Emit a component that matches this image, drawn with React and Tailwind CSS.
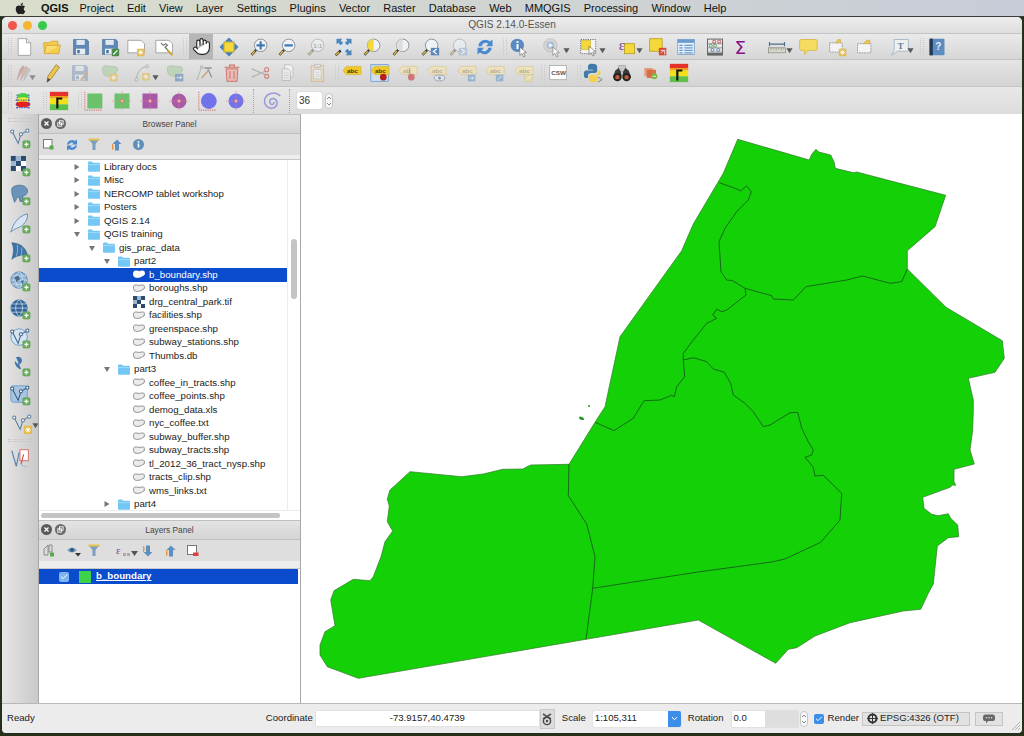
import { Hand, Check } from "lucide-react";
import { FaApple } from "react-icons/fa";

const MENU = [
  "Project", "Edit", "View", "Layer", "Settings", "Plugins", "Vector", "Raster",
  "Database", "Web", "MMQGIS", "Processing", "Window", "Help",
];

const TREE = [
  { level: 0, kind: "closed", label: "Library docs" },
  { level: 0, kind: "closed", label: "Misc" },
  { level: 0, kind: "closed", label: "NERCOMP tablet workshop" },
  { level: 0, kind: "closed", label: "Posters" },
  { level: 0, kind: "closed", label: "QGIS 2.14" },
  { level: 0, kind: "open", label: "QGIS training" },
  { level: 1, kind: "open", label: "gis_prac_data" },
  { level: 2, kind: "open", label: "part2" },
  { level: 3, kind: "file", label: "b_boundary.shp", selected: true },
  { level: 3, kind: "file", label: "boroughs.shp" },
  { level: 3, kind: "raster", label: "drg_central_park.tif" },
  { level: 3, kind: "file", label: "facilities.shp" },
  { level: 3, kind: "file", label: "greenspace.shp" },
  { level: 3, kind: "file", label: "subway_stations.shp" },
  { level: 3, kind: "file", label: "Thumbs.db" },
  { level: 2, kind: "open", label: "part3" },
  { level: 3, kind: "file", label: "coffee_in_tracts.shp" },
  { level: 3, kind: "file", label: "coffee_points.shp" },
  { level: 3, kind: "file", label: "demog_data.xls" },
  { level: 3, kind: "file", label: "nyc_coffee.txt" },
  { level: 3, kind: "file", label: "subway_buffer.shp" },
  { level: 3, kind: "file", label: "subway_tracts.shp" },
  { level: 3, kind: "file", label: "tl_2012_36_tract_nysp.shp" },
  { level: 3, kind: "file", label: "tracts_clip.shp" },
  { level: 3, kind: "file", label: "wms_links.txt" },
  { level: 2, kind: "closed", label: "part4" },
];

const LEVEL_PAD = ["pl-[34px]", "pl-[49px]", "pl-[64px]", "pl-[79px]"];

const OUTLINE =
  "M737.7 139.3 L809.3 160 L811.7 154.3 L816 149.3 L818.7 152 L830.7 155 L834 161.7 L835.3 168.3 L853.3 172.7 L856.7 172 L945.7 195.3 L935 226.7 L907.3 250.7 L907.3 269 L946 307.3 L1002.3 340.7 L1004.3 358.3 L995 372.3 L968.3 378.3 L973.3 400 L973.3 410 L972.7 430 L970 450 L974.3 464 L954 469.3 L954 481.7 L955.7 485.3 L952.7 485 L950 487.3 L922.7 497.3 L924 508.3 L931.7 514.3 L938.3 515.7 L948.3 513.7 L950.7 518.3 L957.7 525 L958.7 536.7 L948.3 537.7 L937.3 546 L933.3 584 L928.3 593.3 L920.7 609.3 L903.3 611 L850 622.7 L815 636 L796.7 647.7 L788.3 649.3 L775.7 663.3 L698.3 620 L586 639.3 L358.3 678.3 L327.3 666.7 L320 655 L320 645 L325 631.7 L335 625.7 L330.7 600 L334 590.7 L353.3 579.3 L370 580.7 L373.3 576.7 L381 556.7 L385 541.7 L392.7 531 L387.3 521.7 L389.3 506 L387.3 499 L390 490 L410 471.7 L461.7 476.7 L483.3 474 L502.7 469.3 L522.7 469 L530.7 465 L569 464.3 L595 422.3 L605 406.7 L620 336.7 L681.7 250.7 L693.3 224 L723.3 173.3 Z";

const BOUNDARIES = [
  "M719.3 182.7 L733.3 187.7 L740.7 190.7 L746.7 186 L751.3 191.7 L748.3 200 L736.7 211.7 L725 228.3 L719 241.7 L721 271.7 L726.7 280 L732.7 280.7 L745 288.3 L771.7 295.7 L773.3 299 L793.3 300 L806 286.7 L846.7 280 L862.7 276 L890 283.3 L901.7 281.7 L907.3 269",
  "M745 288.3 L746 295 L726.7 310 L721.7 311.7 L716.7 309.3 L712.7 315 L716.7 318.3 L706.7 323.3 L693.3 340 L683.3 353.3 L683.3 360 L684.7 376.7 L676.7 386.7 L674.3 396.7 L671.7 395.3 L660 400 L644 400.7 L633.3 418.3 L614 430.7 L595 422.3",
  "M683.3 360 L693.3 357.7 L706.7 361.7 L713.3 369 L724.3 372.3 L730.7 383.3 L733.3 395 L745 403.3 L753.3 411.7 L763.3 426.7 L770 425 L790 412.7 L797.7 412.3 L801.7 428.3 L808.3 441.7 L813.3 450 L811.7 455 L805 457.3 L813.3 467.3 L815 476 L823.3 475.3 L841.7 493.3 L840 520 L820.7 542.3 L785 559 L771.7 562 L700 571.7 L592.7 588.3",
  "M569 464.3 L568.3 495.7 L586.7 524 L595 556.7 L592.7 588.3 L586 639.3",
];

function Svg({ children, size = 20 }) {
  return (
    <svg width={size} height={size} viewBox="0 0 24 24" className="block overflow-visible">
      {children}
    </svg>
  );
}

function Tool({ children, className = "" }) {
  return (
    <div className={`w-[24px] h-[24px] shrink-0 flex items-center justify-center ${className}`}>{children}</div>
  );
}

function DropArrow({ className = "" }) {
  return (
    <svg width="7" height="7" viewBox="0 0 8 8" className={`shrink-0 mt-[8px] ${className}`}>
      <path d="M0.5 1.5 H7.5 L4 7 Z" fill="#5a5a5a" />
    </svg>
  );
}

function Handle({ className = "" }) {
  return (
    <div
      className={`w-[4px] h-[17px] shrink-0 border-x border-dotted border-[#c8c8c8] ${className}`}
    />
  );
}

function Separator({ className = "" }) {
  return <div className={`w-[2px] h-[24px] shrink-0 border-l border-dotted border-[#a4a4a4] ${className}`} />;
}

const PlusBadge = () => (
  <g>
    <rect x="15" y="15" width="8" height="8" rx="1.5" fill="#6ab05c" stroke="#4e9444" strokeWidth="0.5" />
    <path d="M19 16.8 V21.2 M16.8 19 H21.2" stroke="#fff" strokeWidth="1.4" />
  </g>
);

const StarBadge = ({ x = 14, y = 14 }) => (
  <g>
    <rect x={x} y={y} width="9" height="9" rx="1" fill="#e5bb4a" />
    <path
      d={`M${x + 4.5} ${y + 1.5} V${y + 7.5} M${x + 1.5} ${y + 4.5} H${x + 7.5} M${x + 2.4} ${y + 2.4} L${x + 6.6} ${y + 6.6} M${x + 6.6} ${y + 2.4} L${x + 2.4} ${y + 6.6}`}
      stroke="#fff"
      strokeWidth="1"
    />
  </g>
);

const Cursor = ({ x = 12, y = 11 }) => (
  <path
    d={`M${x} ${y} l0 10 l2.6 -2.2 l2 4 l1.8 -0.9 l-2 -3.8 l3.4 -0.4 Z`}
    fill="#fff"
    stroke="#555"
    strokeWidth="0.7"
  />
);

const Mag = ({ children, fill = "#eef3f8" }) => (
  <g>
    <path d="M3 21.5 L9 15" stroke="#444" strokeWidth="3" />
    <path d="M3.4 21 L7 17" stroke="#e6b93a" strokeWidth="1.6" />
    <circle cx="14" cy="10" r="7.5" fill={fill} stroke="#8a8a8a" strokeWidth="1.1" />
    {children}
  </g>
);

const Floppy = () => (
  <g>
    <path d="M3 3 H19 L21 5 V21 H3 Z" fill="#5f88b4" stroke="#4d7096" strokeWidth="0.8" />
    <rect x="6.5" y="3.5" width="10" height="6" fill="#dfe7ef" />
    <rect x="6" y="14" width="11" height="7" fill="#e9eef3" />
    <rect x="7.5" y="15.5" width="3" height="4" fill="#4d7096" />
  </g>
);

const PolyBlob = ({ fill = "#a9cfa0" }) => (
  <path d="M3 6 C3 3 8 3 12 4 C17 5 21 3 21 8 C21 12 17 12 15 15 C12 17 6 16 4 13 C3 11 3 9 3 6 Z" fill={fill} stroke="#8aa88a" strokeWidth="0.8" />
);

const AbcTag = ({ bg = "#ecd98c", color = "#7d6b2c", children, text = "abc" }) => (
  <g>
    <path d="M1 9 L5 4 H23 V14 H5 Z" fill={bg} stroke="#c9b160" strokeWidth="0.6" />
    <text x="6" y="12" fontSize="7.5" fontWeight="700" fontFamily="Liberation Sans, sans-serif" fill={color}>{text}</text>
    {children}
  </g>
);

const DashedBox = ({ x = 2, y = 6, w = 16, h = 12 }) => (
  <rect x={x} y={y} width={w} height={h} fill="#f4f4f4" stroke="#777" strokeWidth="0.8" strokeDasharray="2 1" />
);

const Globe = ({ fill = "#6d9cc8", children }) => (
  <g>
    <circle cx="11" cy="11" r="9" fill={fill} stroke="#4d7aa6" strokeWidth="0.8" />
    <path d="M2 11 H20 M11 2 C6 6 6 16 11 20 M11 2 C16 6 16 16 11 20 M3.5 6.5 H18.5 M3.5 15.5 H18.5" stroke="#d8e6f2" strokeWidth="0.8" fill="none" />
    {children}
  </g>
);

const VNodes = ({ color = "#587a9c" }) => (
  <g fill="none" stroke={color} strokeWidth="1.1">
    <path d="M3.5 5 L10 18 L13 8 L20 4" />
    <circle cx="3.5" cy="5" r="1.7" fill="#fff" />
    <circle cx="13" cy="8" r="1.7" fill="#fff" />
    <circle cx="20" cy="4" r="1.7" fill="#fff" />
  </g>
);

const Checker = ({ x = 2, y = 2, c = 5.5 }) => (
  <g>
    <rect x={x} y={y} width={c * 3} height={c * 3} fill="#fff" />
    {[[0, 0], [2, 0], [1, 1], [0, 2], [2, 2]].map(([a, b]) => (
      <rect key={`${a}-${b}`} x={x + a * c} y={y + b * c} width={c} height={c} fill="#2b4a6e" />
    ))}
    <rect x={x + c} y={y} width={c} height={c} fill="#9db6cf" />
    <rect x={x} y={y + c} width={c} height={c} fill="#9db6cf" />
  </g>
);

const Crosshair = ({ fill, circle }) => (
  <g>
    {circle ? <circle cx="12" cy="12" r="9" fill={fill} /> : <rect x="3" y="3" width="18" height="18" fill={fill} />}
    <path d="M0 12 H24 M12 0 V24" stroke="#e88080" strokeWidth="0.7" strokeDasharray="2 1" />
    <circle cx="12" cy="12" r="2" fill="#eeb0b0" stroke="#d86060" strokeWidth="0.5" />
  </g>
);

const Corner = ({ fill, circle }) => (
  <g>
    {circle ? <circle cx="13" cy="12" r="9.5" fill={fill} /> : <rect x="4" y="3" width="18" height="18" fill={fill} />}
    <path d="M1 1 V23 H22" fill="none" stroke="#d85050" strokeWidth="1" strokeDasharray="1.5 1.2" />
  </g>
);

const Ramp = () => (
  <g>
    <rect x="1" y="1" width="22" height="5" fill="#e5322a" />
    <rect x="1" y="6" width="22" height="3" fill="#f2a218" />
    <rect x="1" y="9" width="22" height="7" fill="#f4e018" />
    <rect x="1" y="16" width="22" height="7" fill="#5fc04a" />
    <path d="M10 21 V9 H16" fill="none" stroke="#111" strokeWidth="2.6" />
  </g>
);

function TopToolbar() {
  return (
    <div className="h-[26px] flex items-center bg-gradient-to-b from-[#eaeaea] to-[#d6d6d6] border-b border-[#c4c4c4]">
      <Handle className="ml-[6px]" />
      <Tool>
        <Svg><path d="M5 2 H15 L20 7 V22 H5 Z" fill="#fff" stroke="#9a9a9a" /><path d="M15 2 V7 H20" fill="#eee" stroke="#9a9a9a" /></Svg>
      </Tool>
      <Tool className="ml-[4px]">
        <Svg><path d="M2 7 H9 L11 5 H19 V10 H22 L20 20 H3 Z" fill="#f4cd4a" stroke="#cfa63a" /><path d="M3 20 L5 10 H22" fill="#f8dc70" stroke="#cfa63a" /></Svg>
      </Tool>
      <Tool className="ml-[5px]"><Svg><Floppy /></Svg></Tool>
      <Tool className="ml-[5px]">
        <Svg><Floppy /><rect x="14" y="14" width="9" height="9" rx="1" fill="#4a8a4a" /><path d="M16 21 L21 16" stroke="#fff" strokeWidth="1.4" /></Svg>
      </Tool>
      <Tool className="ml-[3px]">
        <Svg><path d="M1 4 H17 L21 8 V19 H1 Z" fill="#fff" stroke="#999" /><StarBadge x={12} y={14} /></Svg>
      </Tool>
      <Tool className="ml-[4px]">
        <Svg><path d="M1 4 H17 L21 8 V19 H1 Z" fill="#fff" stroke="#999" /><path d="M7 7 L10 10 L13 8 L15 10 L12 12 L20 21" fill="none" stroke="#777" strokeWidth="1.4" /><path d="M15 16 L21 22" stroke="#d5a62a" strokeWidth="2.2" /></Svg>
      </Tool>
      <Handle className="ml-[6px]" />
      <div className="w-[24px] h-[25px] ml-[2px] shrink-0 bg-[#b6b6b6] flex items-center justify-center">
        <Hand size={19} fill="#fff" stroke="#222" strokeWidth={1.4} />
      </div>
      <Tool className="ml-[4px]">
        <Svg>
          <rect x="6" y="6" width="12" height="12" fill="#f5d93a" stroke="#b89d20" />
          <path d="M12 1 L16 5 H8 Z M12 23 L8 19 H16 Z M1 12 L5 8 V16 Z M23 12 L19 16 V8 Z" fill="#4a86c0" stroke="#33618f" strokeWidth="0.6" />
        </Svg>
      </Tool>
      <Tool className="ml-[6px]"><Svg><Mag><path d="M14 5 V15 M9 10 H19" stroke="#3f78b5" strokeWidth="2.6" /></Mag></Svg></Tool>
      <Tool className="ml-[4px]"><Svg><Mag><path d="M9 10 H19" stroke="#3f78b5" strokeWidth="2.6" /></Mag></Svg></Tool>
      <Tool className="ml-[5px] opacity-50">
        <Svg><Mag><text x="8.6" y="12.8" fontSize="7.5" fontWeight="700" fontFamily="Liberation Sans, sans-serif" fill="#777">1:1</text></Mag></Svg>
      </Tool>
      <Tool className="ml-[4px]">
        <Svg>
          <rect x="6" y="5" width="12" height="13" fill="#d9e4ee" />
          <path d="M3 2 H10 L8 4.5 L11 7 L8 10 L5 7 L3 9 Z M21 2 V9 L19 7 L16 10 L13 7 L16 4.5 L14 2 Z M21 22 H14 L16 19.5 L13 17 L16 14 L19 17 L21 15 Z" fill="#4f86bb" />
          <path d="M2 22 L8 16" stroke="#333" strokeWidth="3" /><path d="M2.4 21.6 L6 18" stroke="#e6b93a" strokeWidth="1.6" />
        </Svg>
      </Tool>
      <Tool className="ml-[4px]">
        <Svg><Mag><path d="M14 2.5 A7.5 7.5 0 0 0 14 17.5 Z" fill="#f5d93a" /></Mag></Svg>
      </Tool>
      <Tool className="ml-[5px]">
        <Svg><Mag><path d="M14 2.5 A7.5 7.5 0 0 0 14 17.5 Z" fill="#dedede" /></Mag></Svg>
      </Tool>
      <Tool className="ml-[5px]">
        <Svg><Mag /><rect x="13" y="13" width="10" height="9" fill="#5a88b8" /><path d="M20 14.5 L16 17.5 L20 20.5" fill="none" stroke="#fff" strokeWidth="1.5" /></Svg>
      </Tool>
      <Tool className="ml-[4px] opacity-50">
        <Svg><Mag /><rect x="13" y="13" width="10" height="9" fill="#8eb0d0" /><path d="M16 14.5 L20 17.5 L16 20.5" fill="none" stroke="#fff" strokeWidth="1.5" /></Svg>
      </Tool>
      <Tool className="ml-[3px]">
        <Svg>
          <path d="M4 11 A8.5 8.5 0 0 1 18 5.5 L21 3 V11 H13 L16 8 A5 5 0 0 0 8 11 Z" fill="#4a8ad0" />
          <path d="M20 13 A8.5 8.5 0 0 1 6 18.5 L3 21 V13 H11 L8 16 A5 5 0 0 0 16 13 Z" fill="#4a8ad0" />
        </Svg>
      </Tool>
      <Handle className="ml-[6px]" />
      <Tool>
        <Svg><circle cx="10" cy="10" r="8" fill="#5a8abf" /><rect x="9" y="8.5" width="2.4" height="6" fill="#fff" /><rect x="9" y="5" width="2.4" height="2.2" fill="#fff" /><Cursor x={13} y={12} /></Svg>
      </Tool>
      <Tool className="ml-[9px] opacity-80">
        <Svg><circle cx="10" cy="10" r="8" fill="#d0d0d0" stroke="#aaa" strokeDasharray="2.5 1" /><circle cx="10" cy="10" r="4.5" fill="#9bb8d6" /><path d="M8.5 7.5 L13 10 L8.5 12.5 Z" fill="#fff" /><Cursor x={13} y={12} /></Svg>
      </Tool>
      <DropArrow className="-ml-[1px]" />
      <Tool className="ml-[7px]">
        <Svg><rect x="2" y="3" width="18" height="17" fill="#f4f4f4" stroke="#555" strokeWidth="0.9" strokeDasharray="1.6 1.2" /><rect x="3" y="4" width="11" height="11" fill="#f5d93a" stroke="#b89d20" strokeWidth="0.5" /><Cursor x={12} y={11} /></Svg>
      </Tool>
      <DropArrow className="-ml-[2px]" />
      <Tool className="ml-[9px]">
        <Svg><rect x="9" y="8" width="12" height="12" fill="#f5d93a" stroke="#b89d20" /><text x="2" y="16" fontSize="18" fontFamily="Liberation Serif, serif" fill="#7b3f98">ε</text></Svg>
      </Tool>
      <DropArrow className="-ml-[3px]" />
      <Tool className="ml-[3px]">
        <Svg><rect x="2" y="2" width="15" height="15" fill="#f5d93a" stroke="#b89d20" /><rect x="13" y="13" width="9" height="9" fill="#d8483a" /><path d="M15.5 19.5 L19.5 15.5 M15 16 H20 V21" stroke="#fff" strokeWidth="0.9" fill="none" /></Svg>
      </Tool>
      <Tool className="ml-[4px]">
        <Svg><rect x="2" y="3" width="20" height="18" fill="#e5eef7" stroke="#7aa2c8" /><rect x="2" y="3" width="20" height="4" fill="#6a9cd0" /><path d="M4 10 H8 M10 10 H20 M4 13 H8 M10 13 H20 M4 16 H8 M10 16 H20 M4 19 H8 M10 19 H20" stroke="#6a9cd0" strokeWidth="1.4" /></Svg>
      </Tool>
      <Tool className="ml-[5px]">
        <Svg>
          <rect x="3" y="2.5" width="18" height="19" fill="#e9e9e9" stroke="#666" strokeWidth="1.2" />
          <path d="M3 8 H21 M3 13 H21 M3 18 H21" stroke="#777" strokeWidth="0.8" />
          <circle cx="11" cy="5.5" r="1.8" fill="none" stroke="#c23a3a" /><circle cx="17" cy="5.5" r="1.8" fill="none" stroke="#c23a3a" />
          <circle cx="7" cy="10.5" r="1.8" fill="none" stroke="#4a9a5a" /><circle cx="12" cy="10.5" r="1.8" fill="none" stroke="#4a9a5a" />
          <circle cx="9" cy="15.5" r="1.8" fill="none" stroke="#4a7ac0" /><circle cx="16" cy="15.5" r="1.8" fill="none" stroke="#4a7ac0" />
          <rect x="3" y="19" width="18" height="3" fill="#666" />
        </Svg>
      </Tool>
      <Tool className="ml-[3px]">
        <Svg><text x="3" y="20" fontSize="22" fontFamily="DejaVu Sans, sans-serif" fill="#84108a">Σ</text></Svg>
      </Tool>
      <Tool className="ml-[11px]">
        <Svg><path d="M3 6 V11 M21 6 V11 M3 8.5 H21" stroke="#4a6d8c" strokeWidth="1.4" /><rect x="2" y="13" width="20" height="6" fill="#d8d8c8" stroke="#777" strokeWidth="0.7" /><path d="M5 13 V16 M8 13 V15 M11 13 V16 M14 13 V15 M17 13 V16 M20 13 V15" stroke="#777" strokeWidth="0.6" /></Svg>
      </Tool>
      <DropArrow className="-ml-[3px]" />
      <Tool className="ml-[3px]">
        <Svg><path d="M4 3 H21 Q23 3 23 5 V14 Q23 16 21 16 H12 L8 21 V16 H4 Q2 16 2 14 V5 Q2 3 4 3 Z" fill="#f6dd62" stroke="#d3b53c" /></Svg>
      </Tool>
      <Tool className="ml-[6px]">
        <Svg><DashedBox x={2} y={7} w={15} h={11} /><path d="M9 7 L12 3 L15 3 V7 Z" fill="#ecc648" stroke="#c69c2a" strokeWidth="0.5" /><StarBadge x={13} y={14} /></Svg>
      </Tool>
      <Tool className="ml-[3px]">
        <Svg><DashedBox x={3} y={8} w={16} h={11} /><path d="M10 8 L14 4 L18 4 V8 Z" fill="#ecc648" stroke="#c69c2a" strokeWidth="0.5" /></Svg>
      </Tool>
      <Tool className="ml-[11px]">
        <Svg><path d="M5 3 H22 V17 H9 L2 22 L5 16 Z" fill="#f0f0f0" stroke="#a3b6c6" strokeWidth="1.1" /><text x="9" y="14" fontSize="11" fontWeight="700" fontFamily="Liberation Serif, serif" fill="#5d7f9e">T</text></Svg>
      </Tool>
      <DropArrow className="-ml-[5px]" />
      <Handle className="ml-[6px]" />
      <Tool className="ml-[1px]">
        <Svg><rect x="3" y="2" width="18" height="20" rx="1" fill="#5c8cc0" /><rect x="3" y="2" width="4" height="20" fill="#233a54" /><text x="10" y="16" fontSize="12" fontWeight="700" fontFamily="Liberation Sans, sans-serif" fill="#e5eef7">?</text></Svg>
      </Tool>
    </div>
  );
}

function EditToolbar() {
  return (
    <div className="h-[27px] flex items-center bg-gradient-to-b from-[#e4e4e4] to-[#d4d4d4] border-b border-[#c4c4c4]">
      <Handle className="ml-[6px]" />
      <Tool className="-ml-[1px] opacity-50">
        <Svg><path d="M5 20 L8 8 L12 3 L14 5 L11 10 Z" fill="#c87070" stroke="#966" strokeWidth="0.6" /><path d="M9 21 L12 9 L16 4 L18 6 L15 11 Z" fill="#c8a070" stroke="#966" strokeWidth="0.6" /><path d="M13 21 L15 11 L19 6 L21 8 L18 13 Z" fill="#b0b0b0" stroke="#888" strokeWidth="0.6" /></Svg>
      </Tool>
      <DropArrow className="-ml-[6px] opacity-60" />
      <Tool className="ml-[4px]">
        <Svg><path d="M6 23 L7 16 L17 2 L21 5 L11 19 Z" fill="#eac548" stroke="#8a7028" strokeWidth="0.8" /><path d="M6 23 L7 18 L10 20 Z" fill="#444" /></Svg>
      </Tool>
      <Tool className="ml-[4px] opacity-40"><Svg><Floppy /><path d="M13 21 L21 11" stroke="#c06a3a" strokeWidth="2.4" /></Svg></Tool>
      <Tool className="ml-[6px] opacity-60"><Svg><PolyBlob /><StarBadge x={12} y={13} /></Svg></Tool>
      <Tool className="ml-[9px] opacity-60">
        <Svg><path d="M4 20 C5 10 10 5 17 4" fill="none" stroke="#7aa07a" strokeWidth="1.2" /><circle cx="4" cy="20" r="1.7" fill="#fff" stroke="#777" /><circle cx="17" cy="4" r="1.7" fill="#fff" stroke="#777" /><StarBadge x={11} y={12} /></Svg>
      </Tool>
      <DropArrow className="-ml-[3px]" />
      <Tool className="ml-[4px] opacity-60"><Svg><PolyBlob /><rect x="12" y="13" width="10" height="9" fill="#5a88b8" /><path d="M14 17.5 H20 M18 15.5 L20 17.5 L18 19.5" fill="none" stroke="#fff" /></Svg></Tool>
      <Tool className="ml-[6px] opacity-60">
        <Svg><path d="M2 21 L8 5" stroke="#7a9a7a" strokeWidth="1" /><circle cx="8" cy="5" r="1.4" fill="#fff" stroke="#666" /><path d="M11 6 H20 M15 6 L20 17" stroke="#666" strokeWidth="1.6" /><path d="M8 18 L16 9" stroke="#b88a3a" strokeWidth="2" /></Svg>
      </Tool>
      <Tool className="ml-[3px] opacity-70">
        <Svg><path d="M5 7 H19 L18 22 H6 Z" fill="#f0b0a8" stroke="#c84a3a" strokeWidth="1.2" /><path d="M3 5 H21 M9 5 V2.5 H15 V5 M9.5 10 V19 M14.5 10 V19" stroke="#c84a3a" strokeWidth="1.3" fill="none" /></Svg>
      </Tool>
      <Tool className="ml-[4px] opacity-60">
        <Svg><path d="M2 7 L18 14 M2 17 L18 10" stroke="#999" strokeWidth="1.5" /><circle cx="20" cy="8" r="2.4" fill="none" stroke="#c84a3a" strokeWidth="1.3" /><circle cx="20" cy="16" r="2.4" fill="none" stroke="#c84a3a" strokeWidth="1.3" /></Svg>
      </Tool>
      <Tool className="ml-[4px] opacity-50">
        <Svg><path d="M8 2 H15 L18 5 V17 H8 Z" fill="#fff" stroke="#999" /><path d="M5 7 H12 L15 10 V21 H5 Z" fill="#f6f6f6" stroke="#999" /><path d="M7 12 H13 M7 15 H13 M7 18 H13" stroke="#bbb" /></Svg>
      </Tool>
      <Tool className="ml-[5px] opacity-50">
        <Svg><rect x="5" y="3" width="15" height="19" fill="#f3d6a4" stroke="#c49a5a" /><rect x="9" y="1.5" width="7" height="4" fill="#ddd" stroke="#999" /><rect x="8" y="8" width="9" height="11" fill="#fff" stroke="#aaa" /><path d="M10 11 H15 M10 13.5 H15 M10 16 H15" stroke="#bbb" /></Svg>
      </Tool>
      <Handle className="ml-[6px]" />
      <Tool className="ml-[1px]">
        <Svg><AbcTag bg="#f0c828" color="#443810" /></Svg>
      </Tool>
      <Tool className="ml-[4px]">
        <Svg><rect x="1" y="2" width="21" height="20" fill="#cfe0f0" stroke="#6a9cd0" /><AbcTag bg="#f0c828" color="#443810" /><circle cx="16" cy="17" r="4" fill="#b81f1f" /></Svg>
      </Tool>
      <Tool className="ml-[4px] opacity-70"><Svg><AbcTag bg="#f2e2b0" color="#a89870" text="ab" /><circle cx="16" cy="17" r="4" fill="#c85050" /><path d="M14 6 V14" stroke="#c85050" /></Svg></Tool>
      <Tool className="ml-[5px] opacity-70"><Svg><AbcTag bg="#f2e2b0" color="#a89870" /><ellipse cx="15" cy="18" rx="6.5" ry="3.5" fill="#e8eef2" stroke="#6f8296" /><circle cx="15" cy="18" r="1.8" fill="#5a7a96" /></Svg></Tool>
      <Tool className="ml-[6px] opacity-70"><Svg><AbcTag bg="#f2e2b0" color="#a89870" /><rect x="13" y="14" width="9" height="8" fill="#7aa4cc" /><path d="M15 18 H20 M18 16 L20 18 L18 20" fill="none" stroke="#fff" /></Svg></Tool>
      <Tool className="ml-[4px] opacity-70"><Svg><AbcTag bg="#f2e2b0" color="#a89870" /><rect x="13" y="14" width="9" height="8" fill="#7aa4cc" /><path d="M15 20 L20 16" stroke="#fff" /></Svg></Tool>
      <Tool className="ml-[5px] opacity-70"><Svg><AbcTag bg="#f2e2b0" color="#a89870" /><rect x="13" y="14" width="9" height="8" fill="#e9dc9c" stroke="#c9b160" strokeWidth="0.5" /><path d="M15 20 L20 16" stroke="#fff" /></Svg></Tool>
      <Handle className="ml-[5px]" />
      <Tool className="ml-[1px]">
        <Svg><rect x="2" y="3" width="20" height="17" fill="#fff" stroke="#aaa" /><text x="4" y="14.5" fontSize="7.5" fontWeight="700" fontFamily="Liberation Sans, sans-serif" fill="#555">CSW</text></Svg>
      </Tool>
      <Handle className="ml-[7px]" />
      <Tool>
        <Svg>
          <path d="M11 1 C6 1 6 3 6 6 V8 H12 V9 H4 C1 9 1 12 1 14 C1 17 2 18 4 18 H6 V15 C6 13 8 12 10 12 H14 C16 12 17 11 17 9 V5 C17 2 15 1 11 1 Z" fill="#4179a8" />
          <path d="M12 23 C17 23 18 21 18 18 V16 H12 V15 H20 L21 12 C21 9 20 9 18 9 V11 C18 13 16 14 14 14 H10 C8 14 7 15 7 17 V19 C7 22 9 23 12 23 Z" fill="#f4d04c" />
          <path d="M18 17 L23 20 L18 23" fill="none" stroke="#777" strokeWidth="1" />
        </Svg>
      </Tool>
      <Tool className="ml-[5px]">
        <Svg>
          <path d="M8 3 H16 L17 10 H7 Z" fill="#c8c8c8" stroke="#888" strokeWidth="0.6" />
          <path d="M4 9 L8 6 L11 11 V14 H13 V11 L16 6 L20 9 L23 17 H13 V15 H11 V17 H1 Z" fill="#3a3a3a" />
          <circle cx="6.5" cy="17" r="5" fill="#222" /><circle cx="17.5" cy="17" r="5" fill="#222" />
          <circle cx="6.5" cy="17" r="2.6" fill="#c05a3a" /><circle cx="17.5" cy="17" r="2.6" fill="#c05a3a" />
        </Svg>
      </Tool>
      <Tool className="ml-[5px]">
        <Svg><rect x="4" y="6" width="10" height="10" fill="#e89a80" /><rect x="7" y="8" width="11" height="10" fill="#d8673a" opacity="0.9" /><circle cx="16" cy="16" r="3.6" fill="#7cb44a" /><path d="M14 16 H18" stroke="#fff" /></Svg>
      </Tool>
      <Tool className="ml-[4px]"><Svg><Ramp /></Svg></Tool>
    </div>
  );
}

function StyleToolbar() {
  return (
    <div className="h-[27px] flex items-center bg-gradient-to-b from-[#e8e8e8] to-[#dcdcdc]">
      <Handle className="ml-[6px]" />
      <Tool className="-ml-[1px]">
        <Svg>
          <ellipse cx="12" cy="6" rx="7" ry="3.5" fill="#46d046" />
          <ellipse cx="12" cy="11" rx="8" ry="3.5" fill="#f0e838" />
          <ellipse cx="12" cy="16" rx="9" ry="3.5" fill="#e82020" />
          <path d="M4 20 H20 M5 4 V21 M19 4 V21 M3 11 H21" stroke="#2040c0" strokeWidth="1" strokeDasharray="2 1" />
        </Svg>
      </Tool>
      <Handle className="ml-[8px]" />
      <Tool><Svg><Ramp /></Svg></Tool>
      <Handle className="ml-[7px]" />
      <Tool><Svg><Corner fill="#6cc26c" /></Svg></Tool>
      <Tool className="ml-[4px]"><Svg><Crosshair fill="#6cc26c" /></Svg></Tool>
      <Tool className="ml-[4px]"><Svg><Crosshair fill="#a65aa8" /></Svg></Tool>
      <Tool className="ml-[5px]"><Svg><Crosshair fill="#a65aa8" circle /></Svg></Tool>
      <Tool className="ml-[5px]"><Svg><Corner fill="#7272ea" circle /></Svg></Tool>
      <Tool className="ml-[4px]"><Svg><Crosshair fill="#7272ea" circle /></Svg></Tool>
      <Separator className="ml-[5px]" />
      <Tool className="ml-[5px]">
        <Svg><path d="M22 6 C16 0 4 2 3 12 C3 19 11 23 16 19 C20 16 18 9 13 9 C9 9 8 14 11 16 C13 17 15 15 14 13" fill="none" stroke="#9a9ad8" strokeWidth="1.8" /></Svg>
      </Tool>
      <Separator className="ml-[5px]" />
      <div className="w-[25px] h-[17px] ml-[6px] bg-white rounded-[2px] flex items-center pl-[2px] text-[10px] text-[#333] shadow-[0_0_1px_#999]">36</div>
      <Stepper className="ml-[3px]" />
    </div>
  );
}

function Stepper({ className = "" }) {
  return (
    <svg width="8" height="16" viewBox="0 0 8 16" className={`shrink-0 ${className}`}>
      <rect x="0.5" y="0.5" width="7" height="15" rx="3.5" fill="#f8f8f8" stroke="#c4c4c4" />
      <path d="M2 6 L4 4 L6 6 M2 10 L4 12 L6 10" fill="none" stroke="#666" strokeWidth="0.8" />
    </svg>
  );
}

function SideToolbar() {
  return (
    <div className="w-[36px] shrink-0 flex flex-col items-center gap-[4.6px] bg-gradient-to-r from-[#e6e6e6] to-[#c9c9c9]">
      <div className="w-[24px] h-[4px] mt-[4px] -mb-[1px] border-y border-dotted border-[#c4c4c4]" />
      <Tool><Svg size={22}><VNodes /><PlusBadge /></Svg></Tool>
      <Tool><Svg size={22}><Checker x={2} y={1} c={5.5} /><PlusBadge /></Svg></Tool>
      <Tool>
        <Svg size={22}><path d="M5 3 C10 0 18 1 20 6 C21 11 17 13 15 13 L15 19 L12 19 L11 14 C8 14 8 18 6 20 C5 15 3 12 3 8 C3 5 3 4 5 3 Z" fill="#6a94ba" stroke="#44688a" strokeWidth="0.8" /><PlusBadge /></Svg>
      </Tool>
      <Tool>
        <Svg size={22}><path d="M2 22 C4 14 9 5 20 2 C21 8 17 15 8 18 C6 19 4 20 2 22 Z" fill="#d9e6f1" stroke="#5f8cb4" strokeWidth="1" /><PlusBadge /></Svg>
      </Tool>
      <Tool>
        <Svg size={22}><path d="M3 2 C10 2 18 6 20 15 C14 15 8 16 3 20 C5 14 6 8 3 2 Z" fill="#3f76aa" stroke="#2a557f" strokeWidth="0.6" /><path d="M9 4 C10 9 9 13 8 17 M14 7 C14 10 14 13 13 16" stroke="#a9c7e2" strokeWidth="0.8" fill="none" /><PlusBadge /></Svg>
      </Tool>
      <Tool><Svg size={22}><Globe fill="#8fb4d6"><path d="M6 8 L10 6 L12 10 L8 13 Z M13 12 L16 11 L15 16 Z" fill="#4a6d8c" /></Globe><PlusBadge /></Svg></Tool>
      <Tool><Svg size={22}><Globe fill="#2f6396" /><PlusBadge /></Svg></Tool>
      <Tool><Svg size={22}><circle cx="11" cy="11" r="9" fill="#d5e4f1" stroke="#6d9cc8" /><VNodes color="#3b5f84" /><PlusBadge /></Svg></Tool>
      <Tool><Svg size={22}><path d="M8 3 C13 1 15 6 12 9 C10 11 7 10 7 7 C7 11 10 14 13 15" fill="#3f76aa" stroke="#3f76aa" strokeWidth="1.3" /><PlusBadge /></Svg></Tool>
      <Tool><Svg size={22}><rect x="2" y="2" width="18" height="18" rx="3" fill="#a8c4de" stroke="#6d9cc8" /><VNodes color="#2f5a84" /><PlusBadge /></Svg></Tool>
      <div className="w-[36px] h-[24px] flex pl-[8px]">
        <Tool><Svg size={22}><VNodes /><StarBadge x={14} y={14} /></Svg></Tool>
        <DropArrow className="-ml-[2px] mt-[10px]" />
      </div>
      <div className="w-[24px] h-[3px] -my-[1px] border-y border-dotted border-[#c4c4c4]" />
      <Tool>
        <Svg size={22}><path d="M3 4 L8 21 L11 6" fill="none" stroke="#5a84ac" strokeWidth="1.3" /><rect x="12" y="3" width="9" height="12" fill="#fff" stroke="#d5484a" strokeWidth="0.8" /><path d="M16 8 L13 19" stroke="#d5484a" strokeWidth="1.2" /><path d="M14 20 L20 22" stroke="#6d9cc8" strokeDasharray="1 1" /></Svg>
      </Tool>
    </div>
  );
}

function PanelHeader({ title }) {
  return (
    <div className="h-[20px] relative flex items-center justify-center bg-gradient-to-b from-[#e4e4e4] to-[#d4d4d4] border-y border-[#c0c0c0] text-[8.3px] text-[#444]">
      <div className="absolute left-[2px] top-[3px] flex gap-[3px]">
        <svg width="11" height="11" viewBox="0 0 11 11">
          <circle cx="5.5" cy="5.5" r="5.5" fill="#5a5a5a" />
          <path d="M3.5 3.5 L7.5 7.5 M7.5 3.5 L3.5 7.5" stroke="#fff" strokeWidth="1.3" />
        </svg>
        <svg width="11" height="11" viewBox="0 0 11 11">
          <circle cx="5.5" cy="5.5" r="5.5" fill="#6a6a6a" />
          <rect x="4.5" y="2.8" width="3.6" height="3.4" fill="none" stroke="#fff" strokeWidth="0.9" />
          <rect x="2.8" y="4.8" width="3.6" height="3.4" fill="none" stroke="#fff" strokeWidth="0.9" />
        </svg>
      </div>
      {title}
    </div>
  );
}

const FunnelIcon = () => (
  <svg width="12" height="13" viewBox="0 0 12 13" className="shrink-0">
    <path d="M0.5 1 H11.5 L7.5 6 V12 H4.5 V6 Z" fill="#7a9fbf" />
    <rect x="0.5" y="0.5" width="11" height="2" fill="#e6c24a" />
  </svg>
);

const SortIcon = () => (
  <svg width="12" height="12" viewBox="0 0 12 12" className="shrink-0">
    <path d="M6 0.5 L10.5 5 H8 V11.5 H4 V5 H1.5 Z" fill="#5f90bd" />
    <path d="M1.5 5 V11 M1 7 H3 M1 9 H3" stroke="#e29a4a" strokeWidth="1" />
  </svg>
);

function BrowserToolbar() {
  return (
    <div className="h-[21px] flex items-center pl-[4px] bg-[#dedede]">
      <svg width="11" height="11" viewBox="0 0 11 11" className="shrink-0">
        <rect x="0.5" y="0.5" width="8.5" height="8.5" fill="#fff" stroke="#777" />
        <rect x="6.5" y="6.5" width="4" height="4" fill="#58a848" />
      </svg>
      <svg width="12" height="12" viewBox="0 0 24 24" className="ml-[12px] shrink-0">
        <path d="M2 11 A10 10 0 0 1 18 4 L22 1 V11 H12 L15 8 A6 6 0 0 0 6 11 Z" fill="#4a8ad0" />
        <path d="M22 13 A10 10 0 0 1 6 20 L2 23 V13 H12 L9 16 A6 6 0 0 0 18 13 Z" fill="#4a8ad0" />
      </svg>
      <div className="ml-[10px]"><FunnelIcon /></div>
      <div className="ml-[11px]"><SortIcon /></div>
      <svg width="11" height="11" viewBox="0 0 11 11" className="ml-[10px] shrink-0">
        <circle cx="5.5" cy="5.5" r="5.5" fill="#5f90bd" />
        <rect x="4.7" y="4.5" width="1.6" height="4" fill="#fff" />
        <rect x="4.7" y="2.2" width="1.6" height="1.5" fill="#fff" />
      </svg>
    </div>
  );
}

function TreeIcon({ kind, selected }) {
  if (kind === "file") {
    return (
      <svg width="12" height="9" viewBox="0 0 12 9" className="shrink-0">
        <path d="M0.6 2.5 C1 0.6 3 0.8 5 1.3 C7 1.8 9 0.6 10.5 1 C11.6 1.6 11.6 4 11 5 C9.5 5.2 9 6.5 7 7 C5 7.6 2 7.6 1 6.3 C0.4 5 0.4 3.5 0.6 2.5 Z" fill={selected ? "#ffffff" : "#ececec"} stroke={selected ? "#ffffff" : "#909090"} strokeWidth="1" />
      </svg>
    );
  }
  if (kind === "raster") {
    return (
      <svg width="12" height="12" viewBox="0 0 24 24" className="shrink-0">
        <Checker x={0} y={0} c={8} />
      </svg>
    );
  }
  return (
    <svg width="12" height="11" viewBox="0 0 12 11" className="shrink-0">
      <path d="M0 1.5 Q0 0.5 1 0.5 H4 L5 1.8 H11 Q12 1.8 12 2.8 V10 Q12 10.8 11 10.8 H1 Q0 10.8 0 10 Z" fill="#74c6f4" />
      <path d="M0 3.6 H12" stroke="#a8def9" strokeWidth="0.8" />
    </svg>
  );
}

function TreeRow({ item }) {
  const isFolder = item.kind === "open" || item.kind === "closed";
  return (
    <div
      className={`h-[13.5px] flex items-center ${LEVEL_PAD[item.level]} ${
        item.selected ? "bg-[#0b4ccd] text-white" : "text-[#222]"
      }`}
    >
      <div className="w-[15px] shrink-0">
        {isFolder && (
          <svg width="6" height="6" viewBox="0 0 6 6" className="ml-[1px]">
            {item.kind === "open" ? (
              <path d="M0 1 H6 L3 6 Z" fill="#777" />
            ) : (
              <path d="M0.5 0 L5.5 3 L0.5 6 Z" fill="#777" />
            )}
          </svg>
        )}
      </div>
      <TreeIcon kind={item.kind} selected={item.selected} />
      <span className="ml-[4px] whitespace-nowrap pt-px">{item.label}</span>
    </div>
  );
}

function BrowserPanel() {
  return (
    <div className="h-[406px] flex flex-col">
      <PanelHeader title="Browser Panel" />
      <BrowserToolbar />
      <div className="h-[5px] bg-[#ededed] border-b border-[#c8c8c8]" />
      <div className="flex-1 flex min-h-0 bg-white text-[9.7px]">
        <div className="w-[248px] shrink-0 overflow-hidden">
          {TREE.map((item) => (
            <TreeRow key={item.label} item={item} />
          ))}
        </div>
        <div className="flex-1 border-l border-[#ececec] pl-[3px]">
          <div className="w-[6px] h-[60px] mt-[79px] rounded-full bg-[#c4c4c4]" />
        </div>
      </div>
      <div className="h-[10px] bg-white border-t border-[#ececec] pl-[2px] pt-[2px]">
        <div className="w-[239px] h-[5px] rounded-full bg-[#c4c4c4]" />
      </div>
    </div>
  );
}

function LayersPanel() {
  return (
    <div className="flex-1 flex flex-col min-h-0">
      <PanelHeader title="Layers Panel" />
      <div className="h-[21px] flex items-center pl-[4px] bg-[#dedede]">
        <svg width="12" height="13" viewBox="0 0 12 13" className="shrink-0">
          <path d="M1 5 L5 1 V11 H1 Z M6 1 H9 V8 H6 Z" fill="none" stroke="#8a8a8a" />
          <rect x="7" y="8.5" width="4" height="4" fill="#58a848" />
        </svg>
        <svg width="16" height="12" viewBox="0 0 16 12" className="ml-[11px] shrink-0">
          <path d="M1 5 Q6 0 11 5 Q6 10 1 5 Z" fill="#7a9fbf" />
          <circle cx="6" cy="5" r="2" fill="#2f5a84" />
          <path d="M9 8 H15 L12 11.5 Z" fill="#333" />
        </svg>
        <div className="ml-[6px]"><FunnelIcon /></div>
        <svg width="22" height="14" viewBox="0 0 22 14" className="ml-[16px] shrink-0">
          <text x="0" y="10" fontSize="11" fontFamily="Liberation Serif, serif" fill="#7b3f98">ε</text>
          <rect x="7" y="9" width="3" height="3" fill="#aaa" />
          <rect x="11" y="9" width="3" height="3" fill="#aaa" />
          <path d="M15 7 H22 L18.5 12 Z" fill="#555" />
        </svg>
        <svg width="12" height="12" viewBox="0 0 12 12" className="ml-[4px] shrink-0">
          <path d="M6 11.5 L10.5 7 H8 V0.5 H4 V7 H1.5 Z" fill="#5f90bd" />
          <path d="M1.5 1 V7 M1 3 H3 M1 5 H3" stroke="#e29a4a" strokeWidth="1" />
        </svg>
        <div className="ml-[11px]"><SortIcon /></div>
        <svg width="12" height="12" viewBox="0 0 12 12" className="ml-[10px] shrink-0">
          <rect x="0.5" y="0.5" width="9" height="9" fill="#fff" stroke="#777" />
          <rect x="6" y="7.5" width="5.5" height="3.5" fill="#e04040" />
        </svg>
      </div>
      <div className="h-[8px] bg-[#ededed] border-b border-[#c8c8c8]" />
      <div className="flex-1 bg-white">
        <div className="h-[15px] mr-[2px] bg-[#0b4ccd] flex items-center pl-[20px]">
          <div className="w-[10px] h-[10px] rounded-[2px] bg-[#7fb4f2] flex items-center justify-center">
            <Check size={8} stroke="#fff" strokeWidth={3} />
          </div>
          <div className="w-[12px] h-[12px] ml-[10px] bg-[#3ed24a]" />
          <span className="ml-[5px] text-[9.7px] font-bold underline text-white">b_boundary</span>
        </div>
      </div>
    </div>
  );
}

function MapCanvas() {
  return (
    <div className="flex-1 bg-white border-l border-[#a8a8a8]">
      <svg viewBox="301 114 720 589" width="720" height="589" className="block">
        <path d={OUTLINE} fill="#13d106" stroke="#2f7a28" strokeWidth="0.7" strokeLinejoin="round" />
        {BOUNDARIES.map((d) => (
          <path key={d} d={d} fill="none" stroke="#14521a" strokeWidth="0.8" strokeLinejoin="round" />
        ))}
        <ellipse cx="581.5" cy="418.3" rx="2.6" ry="1.5" fill="#1c9a24" transform="rotate(20 581.5 418.3)" />
        <circle cx="589" cy="406" r="1" fill="#1c9a24" />
      </svg>
    </div>
  );
}

function StatusBar() {
  return (
    <div className="h-[30px] flex items-center bg-[#ececec] border-t border-[#b8b8b8] text-[9.6px] text-[#222] rounded-b-[4px]">
      <span className="ml-[5px]">Ready</span>
      <span className="ml-auto">Coordinate</span>
      <div className="w-[223px] h-[15px] ml-[3px] bg-white flex items-center justify-center shadow-[0_0_1px_#aaa]">
        -73.9157,40.4739
      </div>
      <div className="w-[15px] h-[20px] ml-px bg-[#dcdcdc] border border-[#c8c8c8] flex items-center justify-center">
        <svg width="12" height="14" viewBox="0 0 12 14">
          <path d="M2 2 L10 7 M2 7 L10 2" stroke="#555" strokeWidth="1.6" />
          <circle cx="6" cy="9" r="3.6" fill="none" stroke="#444" strokeWidth="1.4" />
          <circle cx="6" cy="9" r="1.2" fill="#444" />
        </svg>
      </div>
      <span className="ml-[7px]">Scale</span>
      <div className="w-[88px] h-[16px] ml-[7px] bg-white flex items-center pl-[2px] rounded-[2px] shadow-[0_0_1px_#aaa]">
        <span className="flex-1">1:105,311</span>
        <div className="w-[13px] h-[16px] bg-[#3d8eea] rounded-r-[2px] flex items-center justify-center">
          <svg width="7" height="5" viewBox="0 0 7 5">
            <path d="M1 1 L3.5 3.8 L6 1" fill="none" stroke="#fff" strokeWidth="1" />
          </svg>
        </div>
      </div>
      <span className="ml-[7px]">Rotation</span>
      <div className="w-[66px] h-[16px] ml-[8px] bg-[#dedede] flex shadow-[0_0_1px_#aaa]">
        <div className="w-[33px] bg-white pl-[2px] flex items-center">0.0</div>
      </div>
      <Stepper className="ml-[2px]" />
      <div className="w-[10px] h-[10px] ml-[6px] rounded-[2px] bg-[#3d8eea] flex items-center justify-center">
        <Check size={8} stroke="#fff" strokeWidth={3} />
      </div>
      <span className="ml-[4px]">Render</span>
      <div className="w-[108px] h-[14px] ml-[3px] bg-[#e2e2e2] border border-[#c4c4c4] flex items-center pl-[4px] gap-[2px]">
        <svg width="11" height="11" viewBox="0 0 11 11">
          <circle cx="5.5" cy="5.5" r="4" fill="none" stroke="#333" strokeWidth="2" />
          <path d="M5.5 0 V11 M0 5.5 H11" stroke="#333" strokeWidth="1" />
        </svg>
        <span>EPSG:4326 (OTF)</span>
      </div>
      <div className="w-[28px] h-[14px] ml-[5px] bg-[#e2e2e2] border border-[#c4c4c4] flex items-center justify-center">
        <svg width="12" height="10" viewBox="0 0 12 10">
          <path d="M2 0.5 H10 Q12 0.5 12 3 V5 Q12 7 10 7 H5 L3 9.5 V7 H2 Q0 7 0 5 V3 Q0 0.5 2 0.5 Z" fill="#666" />
          <circle cx="3.5" cy="3.8" r="0.8" fill="#ddd" /><circle cx="6" cy="3.8" r="0.8" fill="#ddd" /><circle cx="8.5" cy="3.8" r="0.8" fill="#ddd" />
        </svg>
      </div>
      <svg width="12" height="12" viewBox="0 0 12 12" className="ml-[6px] mr-px self-end mb-[2px]">
        <path d="M11 3 L3 11 M11 6 L6 11 M11 9 L9 11" stroke="#b4b4b4" strokeWidth="1" />
      </svg>
    </div>
  );
}

export default function App() {
  return (
    <div className="w-[1024px] h-[736px] overflow-hidden bg-[#25301a] font-['Liberation_Sans',Arial,sans-serif] flex flex-col">
      <div className="h-[17px] shrink-0 flex items-center bg-gradient-to-r from-[#d9decb] via-[#d0d4d2] to-[#c7ccd8] border-b border-[#3c3c3c] text-[11px] text-[#111]">
        <FaApple size={13} className="ml-[14px] text-[#222]" />
        <span className="ml-[14px] mr-[11px] font-bold">QGIS</span>
        <div className="flex gap-[13.2px]">
          {MENU.map((m) => (
            <span key={m}>{m}</span>
          ))}
        </div>
      </div>
      <div className="w-[1020px] h-[716px] ml-[2px] flex flex-col overflow-hidden rounded-t-[5px] rounded-b-[4px] bg-[#e8e8e8]">
        <div className="h-[17px] shrink-0 relative flex items-center justify-center bg-gradient-to-b from-[#ececec] to-[#dedede] border-b border-[#c4c4c4] text-[10.1px] text-[#555]">
          <div className="absolute left-[6px] top-[4px] flex gap-[6px]">
            <div className="w-[9px] h-[9px] rounded-full bg-[#f0554e]" />
            <div className="w-[9px] h-[9px] rounded-full bg-[#f5b52e]" />
            <div className="w-[9px] h-[9px] rounded-full bg-[#36c94a]" />
          </div>
          QGIS 2.14.0-Essen
        </div>
        <TopToolbar />
        <EditToolbar />
        <StyleToolbar />
        <div className="flex-1 flex min-h-0">
          <SideToolbar />
          <div className="w-[262px] shrink-0 flex flex-col border-l border-[#a8a8a8] bg-[#ececec]">
            <BrowserPanel />
            <LayersPanel />
          </div>
          <MapCanvas />
        </div>
        <StatusBar />
      </div>
    </div>
  );
}
